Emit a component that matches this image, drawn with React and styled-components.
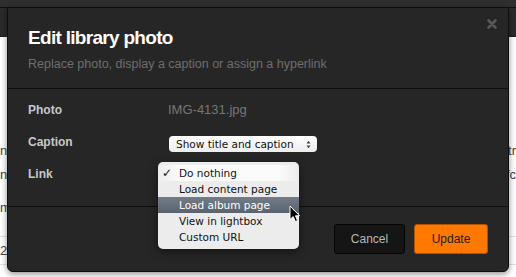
import React from 'react';
import styled, { createGlobalStyle } from 'styled-components';

const GlobalStyle = createGlobalStyle`
  html, body {
    margin: 0;
    padding: 0;
    background: #ffffff;
    overflow: hidden;
    font-family: "Liberation Sans", Arial, sans-serif;
  }
  * { box-sizing: border-box; }
`;

const Page = styled.div`
  position: relative;
  width: 516px;
  height: 277px;
  overflow: hidden;
`;

const TopBar = styled.header`
  display: flex;
  flex-direction: column;
`;

const Strip = styled.div`
  height: 8px;
  background: #2f2f2f;
  border-bottom: 1px solid #101010;
`;

const Toolbar = styled.div`
  height: 29px;
  background: #2a2a2a;
  border-bottom: 1px solid #1c1c1c;
`;

const Backdrop = styled.main`
  display: flex;
  flex-direction: column;
  padding-top: 102px;
  font-size: 13px;
  color: #444;
`;

const BackRow = styled.div`
  display: flex;
  justify-content: space-between;
  align-items: ${p => p.$align || 'center'};
  height: ${p => p.$h || 22}px;
  border-bottom: ${p => (p.$line ? '1px solid #e0e0e0' : 'none')};
`;

const Dialog = styled.section`
  position: absolute;
  left: 7px;
  top: 7px;
  width: 502px;
  height: 265px;
  display: flex;
  flex-direction: column;
  background: #262626;
  border: 1px solid #0e0e0e;
  border-radius: 0 0 6px 6px;
  box-shadow: 0 2px 6px rgba(0, 0, 0, 0.45);
`;

const Header = styled.div`
  display: flex;
  justify-content: space-between;
  align-items: flex-start;
  padding: 18px 20px 16px;
  border-bottom: 1px solid #0e0e0e;
`;

const Title = styled.h2`
  margin: 0;
  font-size: 19px;
  line-height: 24px;
  font-weight: 700;
  letter-spacing: -0.7px;
  color: #ffffff;
`;

const Subtitle = styled.p`
  margin: 6px 0 0;
  font-size: 12.5px;
  line-height: 16px;
  color: #6e6e6e;
`;

const CloseButton = styled.button`
  display: flex;
  margin: -7px -9px 0 0;
  padding: 0;
  border: 0;
  background: none;
  cursor: pointer;
`;

const Body = styled.div`
  display: flex;
  flex-direction: column;
  gap: 16px;
  padding: 13px 20px 24px;
  border-bottom: 1px solid #0e0e0e;
`;

const Row = styled.div`
  display: grid;
  grid-template-columns: 140px 1fr;
  align-items: start;
  height: 16px;
`;

const Label = styled.div`
  font-size: 12px;
  line-height: 16px;
  font-weight: 700;
  color: #c8c8c8;
`;

const Value = styled.div`
  position: relative;
  font-size: 13px;
  line-height: 16px;
  color: #767676;
  padding-top: ${p => p.$offset || 0}px;
`;

const Select = styled.div`
  display: flex;
  align-items: center;
  justify-content: space-between;
  width: 148px;
  height: 16px;
  margin-left: 1px;
  padding: 0 6px 0 7px;
  border-radius: 4px;
  background: linear-gradient(#ffffff, #eeeeee);
  font-family: "DejaVu Sans", sans-serif;
  font-size: 10.5px;
  color: #111;
`;

const Menu = styled.ul`
  position: absolute;
  left: -10px;
  top: -4px;
  width: 141px;
  margin: 0;
  padding: 3px 0 4px;
  list-style: none;
  border-radius: 5px;
  background: rgba(243, 243, 243, 0.97);
  box-shadow: 0 3px 10px rgba(0, 0, 0, 0.5);
  font-family: "DejaVu Sans", sans-serif;
  font-size: 10.5px;
  z-index: 2;
`;

const MenuItem = styled.li`
  display: flex;
  align-items: center;
  height: 16px;
  line-height: 16px;
  color: ${p => (p.$active ? '#ffffff' : '#111111')};
  background: ${p =>
    p.$active
      ? 'linear-gradient(#747c87, #5a6270)'
      : p.$selected
      ? 'linear-gradient(90deg, rgba(255,255,255,0) 0%, rgba(255,255,255,0.8) 15%, rgba(255,255,255,0.8) 85%, rgba(255,255,255,0) 100%)'
      : 'transparent'};
`;

const Check = styled.span`
  width: 21px;
  padding-left: 4px;
  font-size: 12px;
  font-weight: 700;
`;

const Cursor = styled.svg`
  position: absolute;
  left: 131px;
  top: 43px;
`;

const Footer = styled.div`
  display: flex;
  justify-content: flex-end;
  gap: 9px;
  padding: 17px 20px 16px;
`;

const Button = styled.button`
  width: ${p => (p.$primary ? 74 : 71)}px;
  height: 30px;
  border-radius: 3px;
  border: 1px solid ${p => (p.$primary ? '#b35300' : '#050505')};
  background: ${p => (p.$primary ? '#ff7800' : '#151515')};
  color: ${p => (p.$primary ? '#1c1c1c' : '#b8b8b8')};
  font-family: "Liberation Sans", Arial, sans-serif;
  font-size: 12px;
  cursor: pointer;
`;

const options = ['Do nothing', 'Load content page', 'Load album page', 'View in lightbox', 'Custom URL'];

export default function App() {
  return (
    <Page>
      <GlobalStyle />
      <TopBar>
        <Strip />
        <Toolbar />
      </TopBar>
      <Backdrop>
        <BackRow><span>ne</span><span>tr</span></BackRow>
        <BackRow $h={26}><span>n</span><span>fc</span></BackRow>
        <BackRow $h={40}><span>m</span><span></span></BackRow>
        <BackRow $h={10} $line><span></span><span></span></BackRow>
        <BackRow $h={28} $line><span>20</span><span></span></BackRow>
      </Backdrop>
      <Dialog>
        <Header>
          <div>
            <Title>Edit library photo</Title>
            <Subtitle>Replace photo, display a caption or assign a hyperlink</Subtitle>
          </div>
          <CloseButton aria-label="Close">
            <svg width="10" height="10" viewBox="0 0 10 10">
              <path d="M1.5 1.5 L8.5 8.5 M8.5 1.5 L1.5 8.5" stroke="#585858" strokeWidth="2.6" strokeLinecap="round" />
            </svg>
          </CloseButton>
        </Header>
        <Body>
          <Row>
            <Label>Photo</Label>
            <Value>IMG-4131.jpg</Value>
          </Row>
          <Row>
            <Label>Caption</Label>
            <Value $offset={2}>
              <Select>
                <span>Show title and caption</span>
                <svg width="5" height="9" viewBox="0 0 5 9">
                  <path d="M0.5 3.5 L2.5 0.8 L4.5 3.5 Z M0.5 5.5 L2.5 8.2 L4.5 5.5 Z" fill="#444" />
                </svg>
              </Select>
            </Value>
          </Row>
          <Row>
            <Label>Link</Label>
            <Value>
              <Menu>
                {options.map((o, i) => (
                  <MenuItem key={o} $selected={i === 0} $active={i === 2}>
                    <Check>{i === 0 ? '✓' : ''}</Check>
                    {o}
                  </MenuItem>
                ))}
                <Cursor width="12" height="18" viewBox="0 0 12 18">
                  <path d="M1 1 L1 14.5 L4.2 11.6 L6.4 16.6 L8.6 15.6 L6.5 10.8 L10.6 10.8 Z" fill="#000" stroke="#fff" strokeWidth="1" strokeLinejoin="round" />
                </Cursor>
              </Menu>
            </Value>
          </Row>
        </Body>
        <Footer>
          <Button>Cancel</Button>
          <Button $primary>Update</Button>
        </Footer>
      </Dialog>
    </Page>
  );
}
